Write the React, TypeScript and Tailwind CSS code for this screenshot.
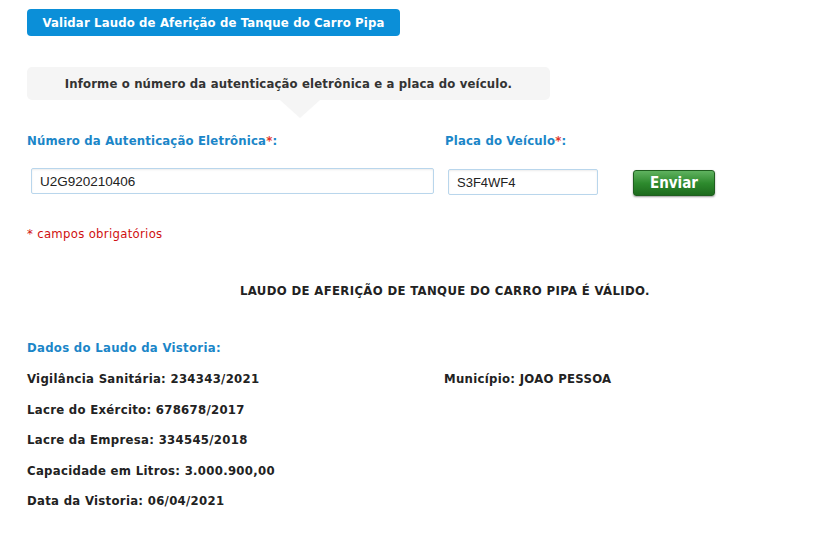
export default function App() {
  const rows = [
    'Lacre do Exército: 678678/2017',
    'Lacre da Empresa: 334545/2018',
    'Capacidade em Litros: 3.000.900,00',
    'Data da Vistoria: 06/04/2021',
  ];

  return (
    <div className="min-h-[543px] w-[827px] bg-white pl-[27px] pt-[9px] font-['DejaVu_Sans_Condensed','DejaVu_Sans',sans-serif] [font-stretch:condensed]">
      {/* Title */}
      <div className="flex h-[27px] w-[373px] items-center justify-center rounded-[4px] bg-[#0b8fd8] text-[13px] font-bold tracking-[0.15px] text-white">
        Validar Laudo de Aferição de Tanque do Carro Pipa
      </div>

      {/* Hint balloon */}
      <div className="mt-[31px] w-[523px]">
        <div className="flex h-[33px] items-center justify-center rounded-[5px] bg-[#f5f5f5] text-[13px] font-bold tracking-[0.15px] text-[#333]">
          Informe o número da autenticação eletrônica e a placa do veículo.
        </div>
        <div className="ml-[253px] h-0 w-0 border-x-[20px] border-t-[18px] border-x-transparent border-t-[#f5f5f5]" />
      </div>

      {/* Form */}
      <div className="mt-[15px] flex items-start">
        <div className="w-[418px]">
          <div className="text-[13px] font-bold leading-[16px] tracking-[0.17px] text-[#1b86c8]">
            Número da Autenticação Eletrônica<span className="text-[#e0352b]">*</span>:
          </div>
          <input
            readOnly
            value="U2G920210406"
            className="ml-[4px] mt-[19px] h-[26px] w-[403px] rounded-[2px] border border-[#b9d6ec] px-[8px] font-['Liberation_Sans',Arial,sans-serif] text-[13.5px] text-[#222] shadow-[inset_0_1px_2px_rgba(0,0,0,0.08)] outline-none"
          />
        </div>
        <div>
          <div className="text-[13px] font-bold leading-[16px] tracking-[0.17px] text-[#1b86c8]">
            Placa do Veículo<span className="text-[#e0352b]">*</span>:
          </div>
          <div className="mt-[19px] flex items-center">
            <input
              readOnly
              value="S3F4WF4"
              className="ml-[3px] h-[26px] w-[150px] rounded-[2px] border border-[#b9d6ec] px-[8px] font-['Liberation_Sans',Arial,sans-serif] text-[13px] text-[#222] shadow-[inset_0_1px_2px_rgba(0,0,0,0.08)] outline-none"
            />
            <button className="ml-[35px] mt-[2px] h-[26px] w-[82px] rounded-[3px] border border-[#1f5e1f] bg-gradient-to-b from-[#5fb25f] via-[#2e8b2e] to-[#1d6b1d] text-[15px] font-bold text-white shadow-[0_1px_2px_rgba(0,0,0,0.4)]">
              Enviar
            </button>
          </div>
        </div>
      </div>

      <div className="mt-[30px] text-[13px] leading-[16px] tracking-[0.3px] text-[#d01010]">* campos obrigatórios</div>

      <div className="mt-[41px] w-[800px] pl-[213px] text-[13px] font-bold leading-[16px] tracking-[0.35px] text-[#222]">
        LAUDO DE AFERIÇÃO DE TANQUE DO CARRO PIPA É VÁLIDO.
      </div>

      {/* Dados */}
      <div className="mt-[41px] text-[13px] font-bold leading-[16px] tracking-[0.3px]">
        <div className="text-[#1b86c8]">Dados do Laudo da Vistoria:</div>
        <div className="mt-[15px] flex">
          <div className="w-[417px] text-[#222]">Vigilância Sanitária: 234343/2021</div>
          <div className="text-[#222]">Município: JOAO PESSOA</div>
        </div>
        {rows.map((r) => (
          <div key={r} className="mt-[14.6px] text-[#222]">
            {r}
          </div>
        ))}
      </div>
    </div>
  );
}
